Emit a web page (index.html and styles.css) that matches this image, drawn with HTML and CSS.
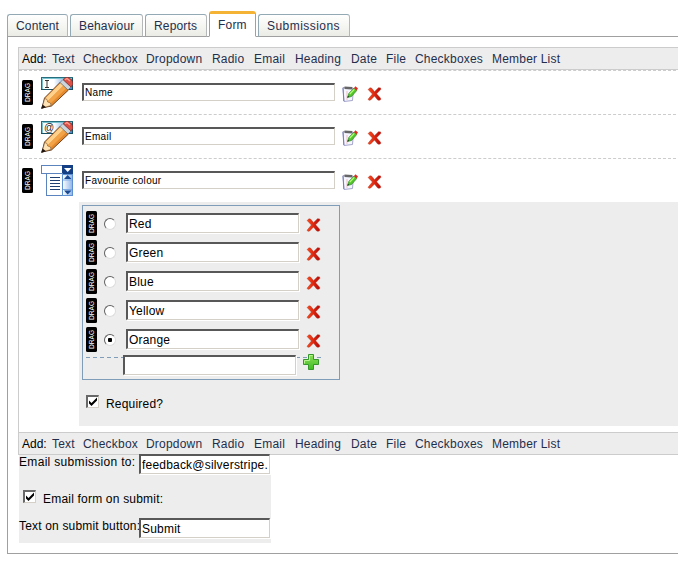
FILE: index.html
```
<!DOCTYPE html>
<html lang="en">
<head>
<meta charset="utf-8">
<title>Form editor</title>
<link rel="stylesheet" href="styles.css">
</head>
<body>
<svg class="defs" width="0" height="0" aria-hidden="true">
  <defs>
    <linearGradient id="field" x1="0" x2="1"><stop offset=".4" stop-color="#fff"/><stop offset="1" stop-color="#3c80d4"/></linearGradient>
    <linearGradient id="blue" x1="0" x2="1"><stop offset="0" stop-color="#fff"/><stop offset="1" stop-color="#8fb5ea"/></linearGradient>
    <linearGradient id="red" x1="0" x2="1"><stop offset="0" stop-color="#ff4a1c"/><stop offset="1" stop-color="#b80505"/></linearGradient>
    <linearGradient id="green" x1="0" y1="0" x2="0" y2="1"><stop offset="0" stop-color="#8ee05c"/><stop offset="1" stop-color="#3fbb22"/></linearGradient>
    <symbol id="drag" viewBox="0 0 11 25">
      <rect width="11" height="25" rx="1.5" fill="#000"/>
      <text class="drag-text" transform="translate(8 22) rotate(-90)" textLength="19" lengthAdjust="spacingAndGlyphs">DRAG</text>
    </symbol>
    <symbol id="pencil" viewBox="0 0 32 32">
      <path d="M1 31L3.500 21 19.500 5 27.500 13 10.500 29z" fill="#e58a2c" stroke="#4b260e" stroke-width=".8"/>
      <path d="M4 21.500L19.500 6 22.300 8.800 6.500 24.500z" fill="#ffd18b"/>
      <path d="M6.500 24.500L22.300 8.800 25 11.500 9 27z" fill="#f4a448"/>
      <path d="M1 31L3.700 21.500 6 22.500 6.700 25 9.500 26 10 28.500z" fill="#ffe3b5" stroke="#67401d" stroke-width=".5"/>
      <path d="M0 32L1.500 27.500 5 30.300z" fill="#20140f"/>
      <path d="M19 5.500L22 2.500 30 10 27 13z" fill="#ccd5dc" stroke="#59646c" stroke-width=".6"/>
      <path d="M22 2.500L24.500.5Q27-.5 29.700 2 32.500 4.800 31.700 7.500L30 10z" fill="#db5145" stroke="#87241f" stroke-width=".6"/>
      <path d="M24 2.800L26 1.500 29 4" fill="none" stroke="#ff9f90" stroke-width="1.200"/>
    </symbol>
    <symbol id="box" viewBox="0 0 32 32">
      <rect x=".5" y=".5" width="31" height="12" fill="url(#field)" stroke="#246e80"/>
      <path d="M1.500 12V1.500H31" fill="none" stroke="#78c2cf"/>
      <path d="M0 12.500H32M31.500 1V12" stroke="#174f65"/>
    </symbol>
    <symbol id="text-field" viewBox="0 0 32 32">
      <use href="#box"/>
      <path d="M4 3.500H8M6 3V10M4 10.500H8" stroke="#333" fill="none"/>
      <use href="#pencil"/>
    </symbol>
    <symbol id="email-field" viewBox="0 0 32 32">
      <use href="#box"/>
      <text class="at" x="3" y="10">@</text>
      <use href="#pencil"/>
    </symbol>
    <symbol id="dropdown" viewBox="0 0 32 32">
      <rect x=".5" y=".5" width="31" height="8" fill="#fff" stroke="#5b83be"/>
      <rect x="21" y="0" width="11" height="9" fill="#153f85"/>
      <path d="M23 3H30.500L26.700 7z" fill="#fff"/>
      <rect x="5.500" y="8.500" width="16" height="22" fill="#fff" stroke="#5b83be"/>
      <path d="M9 12.500H19M9 15.500H19M9 18.500H19M9 21.500H19M9 24.500H19" stroke="#203f72"/>
      <rect x="21.500" y="9.500" width="10" height="21" fill="url(#blue)" stroke="#5d90d2"/>
      <path d="M22 15H31M22 24.500H31" stroke="#7ca9e2"/>
      <path d="M23 14L26.700 10 30.500 14zM23 25.500H30.500L26.700 29.500z" fill="#194991"/>
    </symbol>
    <symbol id="edit" viewBox="0 0 16 16">
      <path d="M1 1.500L11.500 2.500 10.500 14.500 2 15.500z" fill="#f4f5ff" stroke="#9b9bc5" stroke-width=".9"/>
      <path d="M1 2L1.800 15" stroke="#777db5"/>
      <path d="M2.500.5L10.500 1 10 3.500 2.500 3z" fill="#666"/>
      <path d="M5 5V14" stroke="#efa6a6" stroke-width=".7"/>
      <path d="M5.500 11.500L7 7.200 12 2 14.800 4.500 9.500 10.500z" fill="#51c52c" stroke="#267a19" stroke-width=".6"/>
      <path d="M7.800 8L12.300 3.400" stroke="#b6ff74" stroke-width="1.200"/>
      <path d="M12 2L13.500.3 16 2.500 14.500 4.500z" fill="#e12a20"/>
      <path d="M5.300 11.800L6 9.800 7.300 10.800z" fill="#123f12"/>
    </symbol>
    <symbol id="delete" viewBox="0 0 15 15">
      <path d="M.7 2.700L2.700.8 4.500 1.300 7.500 5 11.800.8 14 1 14.300 2.500 9.700 7.300 14 12 14.200 13.500 12.500 14.300 11 14 7.500 9.700 3.300 14 1.500 14.200.7 13 5.300 7.500z" fill="url(#red)" stroke="#a92310" stroke-width=".5"/>
    </symbol>
    <symbol id="add" viewBox="0 0 16 16">
      <path d="M5.500.5H10.500V5.500H15.500V10.500H10.500V15.500H5.500V10.500H.5V5.500H5.500z" fill="url(#green)" stroke="#35962a"/>
      <path d="M1.500 9.500V6.500H6.500V1.500H9.500" fill="none" stroke="#b7f490"/>
    </symbol>
  </defs>
</svg>

<nav class="tabs">
  <a class="tab content">Content</a>
  <a class="tab behaviour">Behaviour</a>
  <a class="tab reports">Reports</a>
  <a class="tab form current">Form</a>
  <a class="tab submissions">Submissions</a>
</nav>

<main class="panel">
  <section class="editor">
    <div class="toolbar"><span class="add-label">Add:</span><a>Text</a><a>Checkbox</a><a>Dropdown</a><a>Radio</a><a>Email</a><a>Heading</a><a>Date</a><a>File</a><a>Checkboxes</a><a>Member List</a></div>
    <div class="fields">
      <div class="field">
        <svg class="drag"><use href="#drag"/></svg><svg class="type"><use href="#text-field"/></svg>
        <input class="input title" value="Name"><svg class="edit"><use href="#edit"/></svg><svg class="delete"><use href="#delete"/></svg>
      </div>
      <div class="field">
        <svg class="drag"><use href="#drag"/></svg><svg class="type"><use href="#email-field"/></svg>
        <input class="input title" value="Email"><svg class="edit"><use href="#edit"/></svg><svg class="delete"><use href="#delete"/></svg>
      </div>
      <div class="field">
        <svg class="drag"><use href="#drag"/></svg><svg class="type"><use href="#dropdown"/></svg>
        <input class="input title" value="Favourite colour"><svg class="edit"><use href="#edit"/></svg><svg class="delete"><use href="#delete"/></svg>
      </div>
      <div class="extra">
        <div class="options">
          <div class="option"><svg class="drag"><use href="#drag"/></svg><i class="radio"></i><input class="input" value="Red"><svg class="delete"><use href="#delete"/></svg></div>
          <div class="option"><svg class="drag"><use href="#drag"/></svg><i class="radio"></i><input class="input" value="Green"><svg class="delete"><use href="#delete"/></svg></div>
          <div class="option"><svg class="drag"><use href="#drag"/></svg><i class="radio"></i><input class="input" value="Blue"><svg class="delete"><use href="#delete"/></svg></div>
          <div class="option"><svg class="drag"><use href="#drag"/></svg><i class="radio"></i><input class="input" value="Yellow"><svg class="delete"><use href="#delete"/></svg></div>
          <div class="option"><svg class="drag"><use href="#drag"/></svg><i class="radio on"></i><input class="input" value="Orange"><svg class="delete"><use href="#delete"/></svg></div>
          <div class="new-option"><input class="input"><svg class="add"><use href="#add"/></svg></div>
        </div>
        <label class="required"><svg class="check" viewBox="0 0 10 10"><path d="M1 3.500V6.500L3.500 9 9 3.500V.5L3.500 6z"/></svg><span>Required?</span></label>
      </div>
    </div>
    <div class="toolbar bottom"><span class="add-label">Add:</span><a>Text</a><a>Checkbox</a><a>Dropdown</a><a>Radio</a><a>Email</a><a>Heading</a><a>Date</a><a>File</a><a>Checkboxes</a><a>Member List</a></div>
  </section>
  <section class="settings">
    <div class="setting"><label class="first-label">Email submission to:</label><input class="input" value="feedback@silverstripe.com"></div>
    <label class="on-submit"><svg class="check" viewBox="0 0 10 10"><path d="M1 3.500V6.500L3.500 9 9 3.500V.5L3.500 6z"/></svg><span>Email form on submit:</span></label>
    <div class="setting"><label class="button-label">Text on submit button:</label><input class="input" value="Submit"></div>
  </section>
</main>
</body>
</html>
```
FILE: styles.css
```
* { box-sizing: border-box; }
html { overflow: hidden; }
body {
  margin: 0;
  width: 678px;
  height: 562px;
  overflow: hidden;
  background: #fff;
  color: #000;
  font: 12px/16px "Liberation Sans", Arial, sans-serif;
  letter-spacing: .2px;
}
svg { display: block; flex: none; }
.defs { height: 0; }

.tabs { display: flex; align-items: flex-end; gap: 2px; height: 37px; padding-left: 7px; }
.tab {
  height: 23px;
  padding: 4px 0 0 8px;
  border: 1px solid #93a9b4;
  border-right-color: #b4b8b8;
  border-bottom-color: #a0a0a0;
  border-radius: 3px 3px 0 0;
  background: linear-gradient(#fff, #ecece6);
  color: #1f2f4c;
  line-height: 15px;
  position: relative;
}
.content { width: 61px; letter-spacing: .15px; }
.behaviour { width: 73px; letter-spacing: .15px; }
.reports { width: 62px; letter-spacing: .15px; }
.form { width: 47px; }
.submissions { width: 92px; letter-spacing: .45px; }
.tab.current {
  height: 26px;
  padding-top: 4px;
  border-color: #a0a0a0;
  border-top: 3px solid #f5b335;
  border-bottom: 1px solid #fff;
  background: #fff;
}

.panel {
  width: 680px;
  height: 518px;
  margin: -1px 0 0 7px;
  padding: 10px 0 0 10px;
  border: 1px solid #a0a0a0;
}
.editor { border-left: 1px solid #ccc; }
.toolbar {
  display: grid;
  grid-template-columns: 30px 31px 63px 66px 42px 41px 56px 35px 29px 77px auto;
  height: 23px;
  padding: 3px 0 0 3px;
  border: solid #ccc;
  border-width: 1px 0;
  background: #ededed;
  color: #1f2f4c;
  white-space: nowrap;
}
.add-label { color: #000; letter-spacing: 0; }
.fields { height: 362px; }
.field {
  display: grid;
  grid-template-columns: 19px 41px 260px 25px 15px;
  align-items: start;
  height: 44px;
  padding-left: 3px;
  border-top: 1px dashed #ccc;
}
.drag { width: 11px; height: 25px; }
.field .drag { margin-top: 9px; }
.drag-text { font: 7px "Liberation Sans", sans-serif; fill: #fff; letter-spacing: 0; }
.type { width: 32px; height: 32px; margin-top: 6px; }
.at { font: 10px "Liberation Sans", sans-serif; fill: #222; letter-spacing: 0; }
.field .input { margin-top: 12px; }
.edit { width: 16px; height: 16px; margin-top: 15px; }
.delete { width: 15px; height: 14px; }
.field .delete { margin-top: 16px; }

.input {
  display: block;
  width: 173px;
  height: 20px;
  margin: 0;
  padding: 0 1px;
  border: 2px solid;
  border-color: #585858 #d4d0c8 #d4d0c8 #585858;
  border-right-width: 1px;
  border-bottom-width: 1px;
  border-radius: 0;
  outline: 0;
  box-shadow: 1px 1px #fff;
  background: #fff;
  color: #000;
  font: 12px "Liberation Sans", Arial, sans-serif;
  letter-spacing: .2px;
}
.input.title { width: 253px; height: 18px; font-size: 10px; letter-spacing: .3px; }

.extra { height: 224px; margin-left: 60px; padding: 3px; background: #ededed; }
.options { width: 258px; height: 175px; padding: 5px 3px 0; border: 1px solid #7f9db9; }
.option {
  display: grid;
  grid-template-columns: 18px 22px 180px 15px;
  align-items: start;
  height: 29px;
}
.option .input { margin-top: 2px; }
.option .delete { margin-top: 7px; }
.radio {
  width: 12px;
  height: 12px;
  margin-top: 7px;
  border: 1px solid;
  border-color: #606060 #ddd #ddd #606060;
  border-radius: 50%;
  background: #fff;
}
.radio.on { background: radial-gradient(circle, #000 0 2px, #fff 2.500px); }
.new-option { display: grid; grid-template-columns: 180px 16px; align-items: start; height: 20px; padding-left: 37px; margin-top: -2px; background: repeating-linear-gradient(90deg, #7f9db9 0 4px, transparent 4px 7px) 0 3px / 237px 1px no-repeat; }
.new-option .input { margin-top: 1px; }
.add { width: 16px; height: 16px; }
.required { display: flex; gap: 7px; padding: 15px 0 0 4px; }
.required span { margin-top: 1px; }
.check { width: 13px; height: 13px; border: solid; border-width: 2px 1px 1px 2px; border-color: #686868 #d4d0c8 #d4d0c8 #686868; background: #fff; }

.settings { width: 252px; height: 88px; margin-left: 1px; background: #ededed; }
.setting { display: grid; grid-template-columns: 120px 131px; height: 36px; }
.setting label { white-space: nowrap; line-height: 15px; }
.first-label { letter-spacing: .32px; }
.button-label { letter-spacing: .17px; }
.setting .input { width: 131px; margin-top: -1px; }
.on-submit { display: flex; gap: 7px; height: 28px; padding-left: 4px; }
.on-submit .check { margin-top: -1px; }
```
